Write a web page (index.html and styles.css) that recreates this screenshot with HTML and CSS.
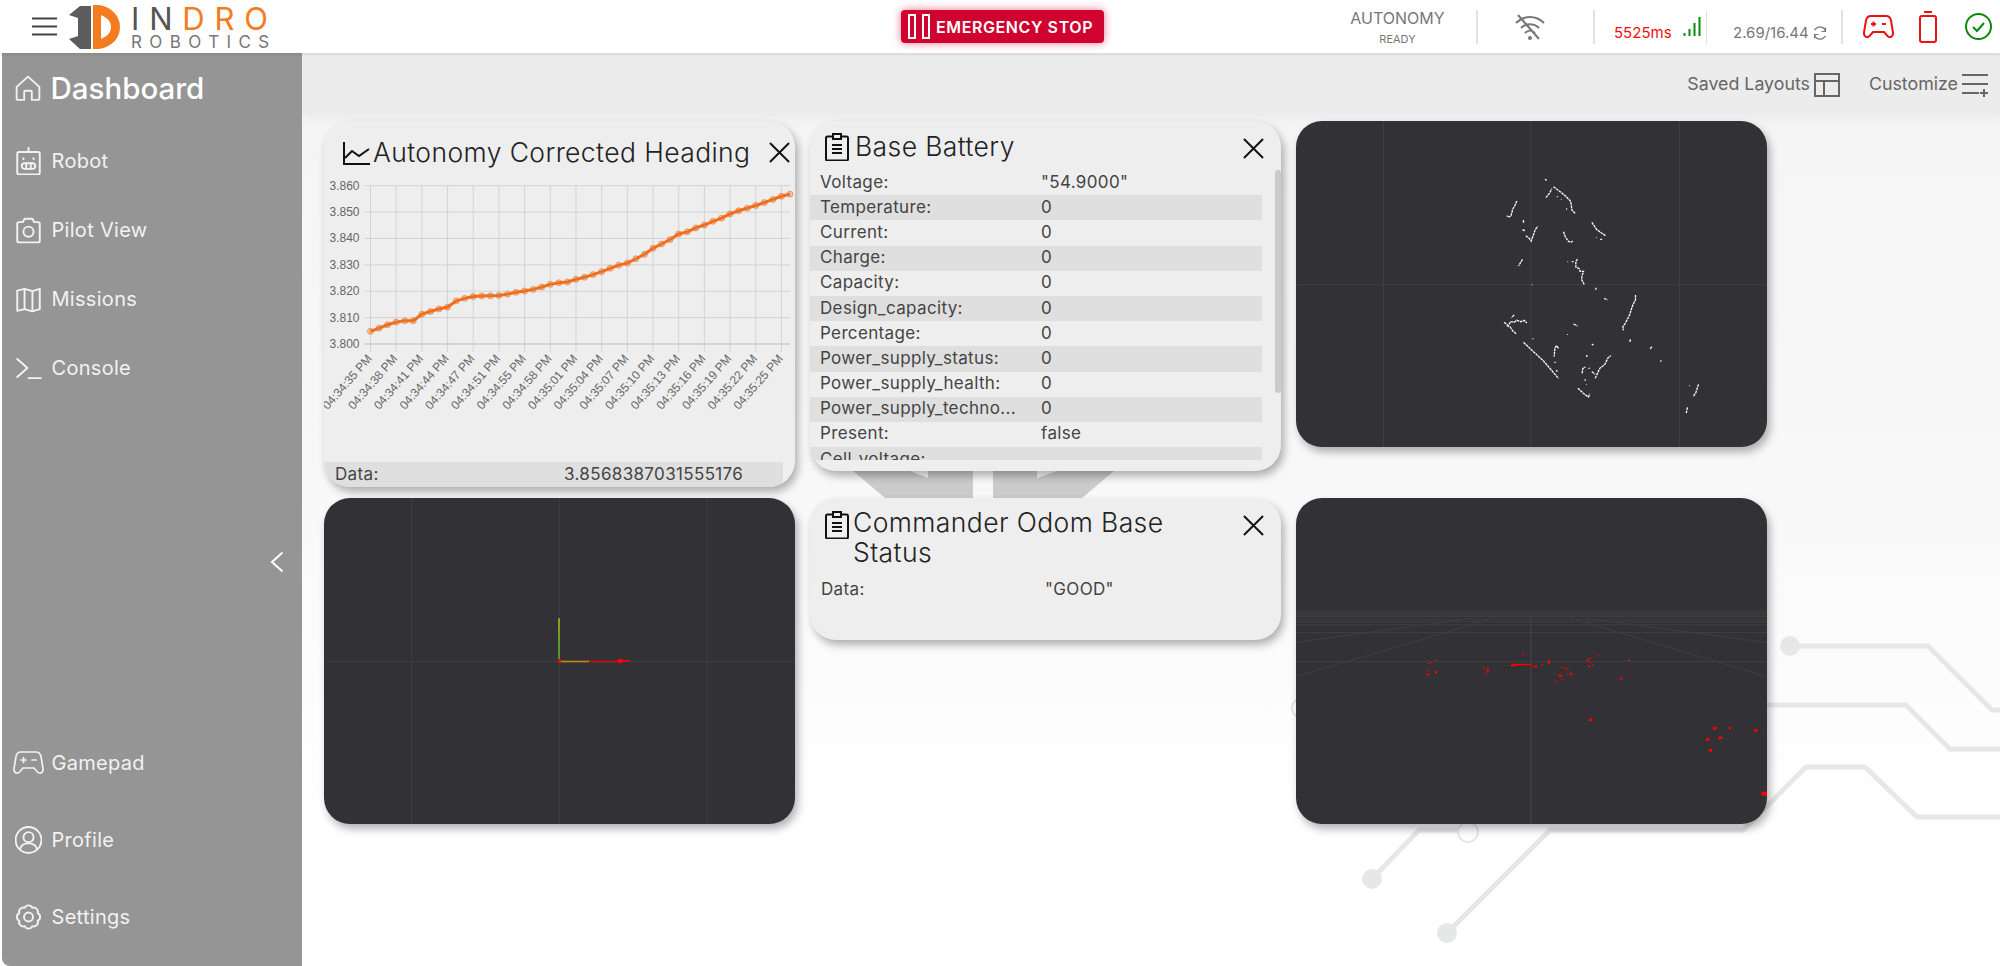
FILE: index.html
```html
<!DOCTYPE html>
<html lang="en">
<head>
    <meta charset="UTF-8">
    <meta name="viewport" content="width=device-width, initial-scale=1.0">
    <title>Indro Robotics Dashboard</title>
    <link rel="stylesheet" href="styles.css">
</head>
<body>
    <header class="topbar">
        <div class="brand">
            <svg class="hamburger" viewBox="0 0 25 19"><path d="M0 1.5h25M0 9.5h25M0 17.5h25"/></svg>
            <div class="logo">
                <svg class="logo-mark" viewBox="0 0 52 44">
                    <path fill="#5c5c5c" d="M0 10 11 1h11v43H11L0 34l9-3V13z"/>
                    <path fill="#f47b20" fill-rule="evenodd" d="M24 0h6c13 2 21 11 21 22s-8 20-21 22h-6zM32 10v24c7-3 10-7 10-12s-3-9-10-12z"/>
                </svg>
                <div class="logo-text">
                    <div class="logo-top">IN<span>DRO</span></div>
                    <div class="logo-bottom">ROBOTICS</div>
                </div>
            </div>
        </div>
        <button class="estop">
            <span class="estop-bars"><i></i><i></i></span>
            EMERGENCY STOP
        </button>
        <div class="status">
            <div class="seg-mode">
                <div class="mode-name">AUTONOMY</div>
                <div class="mode-state">READY</div>
            </div>
            <div class="seg seg-wifi">
                <svg class="wifi" viewBox="0 0 30 26">
                    <path d="M1 9c8-8 20-8 28 0M6 14c5-5 13-5 18 0M10 19c3-3 7-3 10 0M3 1l21 24"/>
                    <circle cx="15" cy="24" r="1"/>
                </svg>
            </div>
            <div class="seg seg-rate">
                <span class="latency">5525ms</span>
                <svg class="bars" viewBox="0 0 18 19"><path d="M1.5 19v-3M6.5 19v-7M11.5 19V6M16.500 19V0"/></svg>
            </div>
            <div class="seg seg-data">
                <span class="rate">2.69/16.44</span>
                <svg class="refresh" viewBox="0 0 14 14"><path d="M12.500 5.500A5.600 5.600 0 0 0 3 2.500L1.500 4M1.500 8.500A5.600 5.600 0 0 0 11 11.500L12.500 10M12.500 1.500v4h-4M1.500 12.500v-4h4"/></svg>
            </div>
            <div class="seg seg-icons">
                <svg class="pad-alert" viewBox="0 0 31 24"><path d="M8 1h15c3 0 4.500 2 5 4.500l2 12c.5 4-3 6-5.500 3.500L21 17H10l-3.500 4C4 23.500.5 21.500 1 17.500l2-12C3.500 3 5 1 8 1zM8 9h5M10.500 6.500v5M19 9h4"/></svg>
                <svg class="batt" viewBox="0 0 18 32"><path d="M5 1h8"/><rect x="1" y="5" width="16" height="26" rx="2"/></svg>
                <svg class="ok" viewBox="0 0 27 27"><circle cx="13.500" cy="13.500" r="12.500"/><path d="M8 14l4 4 7-8"/></svg>
            </div>
        </div>
    </header>

    <div class="layout">
        <nav class="sidebar">
            <a class="nav-item nav-main">
                <svg viewBox="0 0 24 24"><path d="M1.500 11 12 1.500 22.500 11v10.500a1.500 1.500 0 0 1-1.500 1.500h-5.500v-7.500a1 1 0 0 0-1-1h-5a1 1 0 0 0-1 1V23H3a1.500 1.500 0 0 1-1.500-1.500z"/></svg>
                Dashboard
            </a>
            <a class="nav-item">
                <svg viewBox="0 0 24 24"><path d="M12 0v4M3.500 4h17A1.500 1.500 0 0 1 22 5.500v17a1.500 1.500 0 0 1-1.500 1.500h-17A1.500 1.500 0 0 1 2 22.500v-17A1.500 1.500 0 0 1 3.500 4zM7.500 9.500v1M16.500 9.500v1"/><rect x="6" y="14" width="12" height="5" rx="2.500"/><path d="M10 14v5M14 14v5"/></svg>
                Robot
            </a>
            <a class="nav-item">
                <svg viewBox="0 0 24 24"><path d="M3.500 5H7l1.500-3h7L17 5h3.500A1.500 1.500 0 0 1 22 6.500v15a1.500 1.500 0 0 1-1.500 1.500h-17A1.500 1.500 0 0 1 2 21.500v-15A1.500 1.500 0 0 1 3.500 5z"/><circle cx="12" cy="13.500" r="4.500"/></svg>
                Pilot View
            </a>
            <a class="nav-item">
                <svg viewBox="0 0 24 24"><path d="M2 4.500 8.500 3l7 2 6.500-2v18l-6.500 2-7-2L2 22.500zM8.500 3v18M15.500 5v18"/></svg>
                Missions
            </a>
            <a class="nav-item">
                <svg viewBox="0 0 24 24"><path d="M2 4l9 8-9 8M12 21h11"/></svg>
                Console
            </a>
            <div class="collapse">
                <svg viewBox="0 0 14 22"><path d="M12.500 1.500 2 11l10.500 9.500"/></svg>
            </div>
            <a class="nav-item">
                <svg class="wide" viewBox="0 0 31 24"><path d="M8 1h15c3 0 4.500 2 5 4.500l2 12c.5 4-3 6-5.500 3.500L21 17H10l-3.500 4C4 23.500.5 21.500 1 17.500l2-12C3.500 3 5 1 8 1zM8 9h5M10.500 6.500v5M19 9h4"/></svg>
                Gamepad
            </a>
            <a class="nav-item nav-spaced">
                <svg viewBox="0 0 24 24"><circle cx="12" cy="12" r="11.500"/><circle cx="12" cy="9.500" r="4.500"/><path d="M4.500 20c1-3.500 4-5 7.500-5s6.500 1.500 7.500 5"/></svg>
                Profile
            </a>
            <a class="nav-item nav-spaced">
                <svg viewBox="0 0 24 24"><path d="M8.630 3.870A3.700 3.700 0 0 1 15.370 3.870 3.700 3.700 0 0 1 20.130 8.630 3.700 3.700 0 0 1 20.130 15.370 3.700 3.700 0 0 1 15.370 20.130 3.700 3.700 0 0 1 8.630 20.130 3.700 3.700 0 0 1 3.870 15.370 3.700 3.700 0 0 1 3.870 8.630 3.700 3.700 0 0 1 8.630 3.870z"/><circle cx="12" cy="12" r="4"/></svg>
                Settings
            </a>
        </nav>

        <main class="main">
            <svg class="circuit" viewBox="302 53 1698 913">
                <path class="watermark" d="M840 460 885 498H1082L1127 460z"/>
                <path class="watermark-cut" d="M973 460h20v38h-20zM910 471h18v7zM1057 471h-20v7z"/>
                <path class="trace" d="M1790 646H1928L1992 710H2000M1767 705H1906L1950 749H2000M1447 933 1550 830H1743L1806 767H1865L1917 817H2000M1372 879 1419 830H1458"/>
                <circle class="pad" cx="1790" cy="646" r="10"/>
                <circle class="pad" cx="1447" cy="933" r="10"/>
                <circle class="pad" cx="1372" cy="879" r="10"/>
                <circle class="pad-open" cx="1468" cy="832" r="10"/>
                <circle class="pad-open" cx="1302" cy="708" r="10"/>
            </svg>

            <div class="toolbar">
                <div class="tool">
                    Saved Layouts
                    <svg viewBox="0 0 26 24"><path d="M1 1h24v22H1zM1 8h24M10 8v15"/></svg>
                </div>
                <div class="tool">
                    Customize
                    <svg viewBox="0 0 26 24"><path d="M0 2h26M0 11h26M0 20h17M22 16v8M18 20h8"/></svg>
                </div>
            </div>

            <div class="grid">
                <section class="card card-chart">
                    <div class="card-head head-chart">
                        <svg class="card-icon" viewBox="0 0 27 23"><path d="M1 0v22h26M2 16l7-7 7 5 10-7"/></svg>
                        <h3>Autonomy Corrected Heading</h3>
                        <svg class="close" viewBox="0 0 22 22"><path d="M1 1l20 20M21 1 1 21"/></svg>
                    </div>
                    <svg id="chart" class="chart" viewBox="324 170 471 292"></svg>
                    <div class="row row-chart"><span class="row-key">Data:</span><span>3.8568387031555176</span></div>
                    <div class="resize"></div>
                </section>

                <section class="card card-battery">
                    <div class="card-head head-battery">
                        <svg class="card-icon" viewBox="0 0 24 28"><path d="M7 3.500H2.500A1.500 1.500 0 0 0 1 5v21a1.500 1.500 0 0 0 1.500 1.500h19A1.500 1.500 0 0 0 23 26V5a1.500 1.500 0 0 0-1.500-1.500H17M8 1h8v5H8zM7 12h10M7 16h10M7 20h10"/></svg>
                        <h3>Base Battery</h3>
                        <svg class="close" viewBox="0 0 22 22"><path d="M1 1l20 20M21 1 1 21"/></svg>
                    </div>
                    <div class="rows">
                        <div class="row"><span class="row-key">Voltage:</span><span>"54.9000"</span></div>
                        <div class="row"><span class="row-key">Temperature:</span><span>0</span></div>
                        <div class="row"><span class="row-key">Current:</span><span>0</span></div>
                        <div class="row"><span class="row-key">Charge:</span><span>0</span></div>
                        <div class="row"><span class="row-key">Capacity:</span><span>0</span></div>
                        <div class="row"><span class="row-key">Design_capacity:</span><span>0</span></div>
                        <div class="row"><span class="row-key">Percentage:</span><span>0</span></div>
                        <div class="row"><span class="row-key">Power_supply_status:</span><span>0</span></div>
                        <div class="row"><span class="row-key">Power_supply_health:</span><span>0</span></div>
                        <div class="row"><span class="row-key">Power_supply_techno...</span><span>0</span></div>
                        <div class="row"><span class="row-key">Present:</span><span>false</span></div>
                        <div class="row"><span class="row-key">Cell_voltage:</span><span></span></div>
                    </div>
                    <div class="scrollbar"></div>
                    <div class="resize"></div>
                </section>

                <section class="card card-dark">
                    <svg class="scene" viewBox="18 18 1412 978">
                        <path class="grid-line" d="M280 18V996M722 18V996M1168 18V996M18 509H1430"/>
                        <path class="scan" d="M765 192l4 5M790 215l20 15 15 12 15 15 3 10 2 18 10 10M767 248l10-12 8-15M800 245h3M812 253h2M828 282h3M680 258l-6 14-6 10-4 14-2 8-9 2-3-4M700 315v10M697 345h4l3 4M707 362l10 8 6 8 8-22 4-12 8-10M820 350l5 15 10 14 8 2 5-3M905 322l15 22 14 10 12 8M918 368h2M930 373h6M697 433l-12 20M832 440h2M845 440h5M862 432l-5 8v16l10 5 3 8h10l-4 12-2 12 8 15M725 509h2M917 518v6M942 550l10 5M1036 540v14l-8 16-10 30-12 24-8 12 2 10M1020 673v8M1085 695l-6 8M1112 736v4M672 600l-8 8M642 622l12 10 8-12 10 2 8-6 12 4 10-4 8 8M650 632l10 4 8 12 10 8M700 682l30 28 30 28 45 52M727 671h3M805 700l-6-8-5 8-2 25M795 740v4M800 765v5M850 627l12 6M832 657v2M905 687l5 4M890 720v6M876 775l2-15 8-4M895 760h4M905 770l10 8M915 790l14-30 15-12 10-20 8-6M885 793v4M888 808h2M863 820l20 18 12 8 4-10M1197 812h2M1225 808l-8 25-8 12M1192 877l-4 18"/>
                    </svg>
                    <div class="resize resize-dark"></div>
                </section>

                <section class="card card-dark">
                    <svg class="scene" viewBox="12 24 1413 979">
                        <defs>
                            <linearGradient id="axisY" gradientUnits="userSpaceOnUse" x1="717" y1="508" x2="717" y2="385"><stop offset="0" stop-color="#3fae2a"/><stop offset="1" stop-color="#b0b020"/></linearGradient>
                        </defs>
                        <path class="grid-line" d="M274 24V1003M718 24V1003M1162 24V1003M12 515H1425"/>
                        <path class="axis" stroke="url(#axisY)" d="M717 385v123"/>
                        <path class="axis" stroke="#cc1111" d="M807 515H900"/>
                        <path class="axis" stroke="#c4851c" d="M722 515H807"/>
                        <path class="axis-tip" d="M900 513h30M718 514h3"/>
                        <rect class="axis-dot" x="894" y="507" width="13" height="13"/>
                        <rect class="axis-dot" x="715" y="508" width="8" height="12"/>
                    </svg>
                    <div class="resize resize-dark"></div>
                </section>

                <section class="card card-status">
                    <div class="card-head head-status">
                        <svg class="card-icon" viewBox="0 0 24 28"><path d="M7 3.500H2.500A1.500 1.500 0 0 0 1 5v21a1.500 1.500 0 0 0 1.500 1.500h19A1.500 1.500 0 0 0 23 26V5a1.500 1.500 0 0 0-1.500-1.500H17M8 1h8v5H8zM7 12h10M7 16h10M7 20h10"/></svg>
                        <h3>Commander Odom Base Status</h3>
                        <svg class="close" viewBox="0 0 22 22"><path d="M1 1l20 20M21 1 1 21"/></svg>
                    </div>
                    <div class="row row-status"><span class="row-key">Data:</span><span>"GOOD"</span></div>
                    <div class="resize"></div>
                </section>

                <section class="card card-dark">
                    <svg class="scene" viewBox="13 24 1039 979" preserveAspectRatio="none">
                        <path class="horizon" d="M13 360H1052V382H13z"/>
                        <path class="grid-line" d="M531 380V1003M13 380H1052M13 388H1052M13 395H1052M13 405H1052M13 428H1052M13 515H1052M13 560 450 385M13 458 400 385M1052 560 620 385M1052 458 650 385"/>
                        <path class="laser" d="M490 524h43M487 527h12M535 530h10M571 511v11"/>
                        <g id="laser-dots"></g>
                    </svg>
                    <div class="resize resize-dark"></div>
                </section>
            </div>
        </main>
    </div>

    <script src="app.js"></script>
</body>
</html>
```

FILE: styles.css
```css
* {
    box-sizing: border-box;
}

body {
    font-family: Inter, "Open Sans", sans-serif;
    margin: 0;
    height: 100vh;
    overflow: hidden;
    background: #fff;
    color: #333;
    display: flex;
    flex-direction: column;
}

svg {
    display: block;
    flex: none;
}

/* Top bar */
.topbar {
    height: 53px;
    flex: none;
    display: flex;
    align-items: center;
    background: #fff;
    box-shadow: 0 1px 4px rgba(0, 0, 0, 0.12);
    position: relative;
    z-index: 2;
}

.brand {
    width: 901px;
    display: flex;
    align-items: center;
    padding-left: 32px;
}

.hamburger {
    width: 25px;
    height: 19px;
    fill: none;
    stroke: #444;
    stroke-width: 2;
}

.logo {
    display: flex;
    align-items: center;
    margin-left: 12px;
}

.logo-mark {
    width: 52px;
    height: 44px;
}

.logo-text {
    margin-left: 10px;
    line-height: 1;
}

.logo-top {
    font-size: 31px;
    font-weight: 400;
    letter-spacing: 9.800px;
    color: #555;
    height: 28px;
}

.logo-top span {
    color: #f47b20;
}

.logo-bottom {
    font-size: 17px;
    letter-spacing: 7.400px;
    color: #777;
    margin-top: 3px;
}

.estop {
    width: 203px;
    height: 33px;
    display: flex;
    align-items: center;
    gap: 6px;
    padding: 0 0 0 7px;
    border: none;
    border-radius: 4px;
    background: #d0022f;
    color: #fff;
    font-family: inherit;
    font-size: 16px;
    font-weight: 600;
    letter-spacing: 0.6px;
    white-space: nowrap;
    box-shadow: 0 0 8px rgba(208, 2, 47, 0.55);
}

.estop-bars {
    display: flex;
    gap: 6px;
}

.estop-bars i {
    width: 8px;
    height: 25px;
    border: 2px solid #fff;
}

.status {
    margin-left: auto;
    padding-right: 8px;
    display: flex;
    align-items: center;
    color: #777;
}

.seg-mode {
    width: 127px;
    padding-right: 30px;
    text-align: center;
}

.mode-name {
    font-size: 16px;
    line-height: 18px;
}

.mode-state {
    font-size: 11px;
    line-height: 12px;
    margin-top: 6px;
}

.seg {
    height: 34px;
    display: flex;
    align-items: center;
    border-left: 2px solid #e2e2e2;
}

.seg-wifi {
    width: 117px;
    padding-left: 37px;
}

.wifi {
    width: 30px;
    height: 26px;
    fill: none;
    stroke: #777;
    stroke-width: 2;
}

.seg-rate {
    width: 113px;
    padding-left: 19px;
    gap: 11px;
}

.latency {
    font-size: 15px;
    color: #f01010;
    margin-top: 12px;
}

.bars {
    width: 18px;
    height: 19px;
    fill: none;
    stroke: #0a8a0a;
    stroke-width: 2;
}

.seg-data {
    width: 135px;
    padding-left: 26px;
    gap: 4px;
    border-left-width: 1px;
}

.rate {
    font-size: 15px;
    margin-top: 12px;
}

.refresh {
    width: 14px;
    height: 14px;
    margin-top: 12px;
    fill: none;
    stroke: #777;
    stroke-width: 1.200;
}

.seg-icons {
    padding-left: 20px;
    overflow: visible;
}

.pad-alert {
    width: 31px;
    height: 24px;
    fill: none;
    stroke: #ee1111;
    stroke-width: 2;
}

.batt {
    width: 18px;
    height: 32px;
    margin-left: 25px;
    fill: none;
    stroke: #ee1111;
    stroke-width: 2;
}

.ok {
    width: 27px;
    height: 27px;
    margin-left: 28px;
    fill: none;
    stroke: #0a8a0a;
    stroke-width: 2;
}

/* Page body */
.layout {
    flex: 1;
    display: flex;
    min-height: 0;
}

.sidebar {
    width: 300px;
    margin-left: 2px;
    flex: none;
    display: flex;
    flex-direction: column;
    background: #959595;
    border-radius: 0 0 0 8px;
    color: #f2f2f2;
    padding: 11px 0 15px 13px;
    position: relative;
    z-index: 1;
}

.nav-item {
    height: 69px;
    display: flex;
    align-items: center;
    gap: 9.500px;
    font-size: 20px;
    letter-spacing: 0.3px;
}

.nav-item svg {
    width: 27px;
    height: 28px;
    fill: none;
    stroke: #f2f2f2;
    stroke-width: 1.700;
    stroke-linejoin: round;
    stroke-linecap: round;
}

.nav-item svg.wide {
    width: 31px;
    height: 24px;
    margin-left: -2px;
    margin-right: -2px;
}

.nav-main {
    height: 48px;
    margin-bottom: 14px;
    font-size: 29.500px;
    letter-spacing: 0;
    font-weight: 500;
    color: #fff;
}

.nav-main svg {
    width: 26px;
    height: 26px;
}

.nav-spaced {
    margin-top: 8px;
}

.collapse {
    flex: 1;
    display: flex;
    align-items: center;
    justify-content: flex-end;
    padding: 0 18px 6px 0;
}

.collapse svg {
    width: 14px;
    height: 22px;
    fill: none;
    stroke: #fff;
    stroke-width: 2;
}

/* Main area */
.main {
    flex: 1;
    position: relative;
    background: linear-gradient(#f4f4f4 0, #f8f8f8 45%, #fff 85%);
}

.circuit {
    position: absolute;
    left: 0;
    top: 0;
    width: 1698px;
    height: 913px;
}

.watermark {
    fill: #cbcbcb;
}

.watermark-cut {
    fill: #f8f8f8;
}

.trace {
    fill: none;
    stroke: #e6e8e8;
    stroke-width: 5;
}

.pad {
    fill: #e6e8e8;
}

.pad-open {
    fill: #fff;
    stroke: #e6e8e8;
    stroke-width: 2;
}

.toolbar {
    height: 62px;
    position: relative;
    display: flex;
    justify-content: flex-end;
    gap: 29px;
    padding: 20px 12px 0 0;
    background: #ececec;
    box-shadow: 0 4px 10px #ececec;
    font-size: 17.800px;
    color: #666;
}

.tool {
    display: flex;
    align-items: flex-start;
    gap: 4px;
    line-height: 21px;
}

.tool svg {
    width: 26px;
    height: 24px;
    fill: none;
    stroke: #666;
    stroke-width: 2;
}

.grid {
    position: relative;
    margin-top: 6px;
    padding-left: 22px;
    display: grid;
    grid-template-columns: repeat(3, 471px);
    grid-template-rows: 377px 326px;
    column-gap: 15px;
    align-items: start;
}

.card {
    position: relative;
    background: #eeeeee;
    border-radius: 26px;
    box-shadow: 3px 5px 9px rgba(0, 0, 0, 0.3);
    overflow: hidden;
}

.card h3 {
    flex: 1;
    margin: 0;
    font-size: 26.500px;
    font-weight: 300;
    letter-spacing: 0.4px;
    line-height: 30px;
    color: #222;
}

.card-head {
    display: flex;
    align-items: flex-start;
}

.close {
    width: 21px;
    height: 21px;
    fill: none;
    stroke: #111;
    stroke-width: 2;
}

.card-icon {
    fill: none;
    stroke: #111;
    stroke-width: 2;
}

.card-chart {
    height: 366px;
}

.head-chart {
    height: 49px;
    padding: 21px 5px 0 19px;
}

.head-chart h3 {
    margin-top: -5px;
}

.head-chart .card-icon {
    width: 27px;
    height: 23px;
    margin-right: 3px;
}

.chart {
    width: 471px;
    height: 292px;
}

.chart-grid {
    stroke: #d3d3d3;
    stroke-width: 1;
}

.chart-base {
    stroke: #bbb;
    stroke-width: 1;
}

.chart-line {
    fill: none;
    stroke: #ee6f1f;
    stroke-width: 3;
}

.chart-dot {
    fill: rgba(238, 111, 31, 0.35);
    stroke: rgba(238, 111, 31, 0.6);
    stroke-width: 1;
}

.chart-text {
    font-family: "Liberation Sans", Arial, sans-serif;
    font-size: 12px;
    fill: #666;
}

.row {
    height: 25.200px;
    display: flex;
    align-items: center;
    padding: 0 0 2px 10px;
    font-size: 17px;
    letter-spacing: 0.35px;
    color: #444;
}

.row-key {
    width: 221px;
    flex: none;
}

.rows {
    height: 290px;
    width: 452px;
    overflow: hidden;
}

.rows .row:nth-child(even) {
    background: #dfdfdf;
}

.row-chart {
    width: 459px;
    background: #dfdfdf;
    padding-left: 11px;
}

.row-chart .row-key {
    width: 229px;
}

.card-battery {
    height: 350px;
}

.head-battery {
    height: 49px;
    padding: 12px 17px 0 15px;
}

.head-battery h3 {
    margin-top: -2px;
}

.head-battery .card-icon,
.head-status .card-icon {
    width: 24px;
    height: 28px;
    margin-right: 6px;
}

.head-battery .close {
    margin-top: 5px;
}

.scrollbar {
    position: absolute;
    right: 0;
    top: 49px;
    width: 6px;
    height: 223px;
    background: #cbcbcb;
    border-radius: 3px;
}

.card-status {
    height: 142px;
}

.head-status {
    height: 77px;
    padding: 11px 17px 0 15px;
}

.head-status h3 {
    margin-top: -2px;
}

.head-status .card-icon {
    margin-top: 2px;
    margin-right: 4px;
}

.head-status .close {
    margin-top: 6px;
}

.row-status {
    padding-left: 11px;
    margin-top: 2px;
}

.row-status .row-key {
    width: 224px;
}

.card-dark {
    height: 326px;
    background: #323135;
}

.scene {
    width: 471px;
    height: 326px;
}

.grid-line {
    fill: none;
    stroke: #3f3f42;
    stroke-width: 3;
}

.scan {
    fill: none;
    stroke: #f8f8f8;
    stroke-width: 4;
    stroke-dasharray: 8 2;
}

.axis {
    fill: none;
    stroke-width: 5;
}

.axis-tip {
    fill: none;
    stroke: #f00;
    stroke-width: 5;
}

.axis-dot {
    fill: #f00;
}

.horizon {
    fill: #38383a;
}

.laser {
    fill: none;
    stroke: #f00;
    stroke-width: 5;
}

.laser-dot {
    fill: #f00;
}

.resize {
    position: absolute;
    right: 1px;
    bottom: 1px;
    width: 9px;
    height: 9px;
    background: linear-gradient(135deg, transparent 48%, #666 48%, #666 58%, transparent 58%, transparent 72%, #666 72%, #666 82%, transparent 82%);
}

.resize-dark {
    background: linear-gradient(135deg, transparent 48%, #aaa 48%, #aaa 58%, transparent 58%, transparent 72%, #aaa 72%, #aaa 82%, transparent 82%);
}
```

FILE: app.js
```js
// heading samples, chart drawn oldest to newest
const heading = [3.8048, 3.806, 3.8073, 3.8083, 3.8088, 3.8088, 3.8113, 3.8123, 3.8133, 3.814, 3.8163, 3.8173, 3.818, 3.8182, 3.8183, 3.8184, 3.8189, 3.8196, 3.8201, 3.8207, 3.8216, 3.8226, 3.8232, 3.8235, 3.8245, 3.8253, 3.8263, 3.8274, 3.8287, 3.8299, 3.8307, 3.8323, 3.834, 3.8363, 3.8379, 3.8396, 3.8417, 3.8425, 3.844, 3.8451, 3.8465, 3.8477, 3.8493, 3.8505, 3.8515, 3.8525, 3.8536, 3.8548, 3.856, 3.8568];
const times = ["04:34:35 PM", "04:34:38 PM", "04:34:41 PM", "04:34:44 PM", "04:34:47 PM", "04:34:51 PM", "04:34:55 PM", "04:34:58 PM", "04:35:01 PM", "04:35:04 PM", "04:35:07 PM", "04:35:10 PM", "04:35:13 PM", "04:35:16 PM", "04:35:19 PM", "04:35:22 PM", "04:35:25 PM"];

const plotLeft = 370.5, plotRight = 790, plotTop = 185.7, plotBottom = 344;
const xStep = (plotRight - plotLeft) / (heading.length - 1);

function yFor(value) {
    return plotBottom - (value - 3.8) / 0.06 * (plotBottom - plotTop);
}

function drawChart() {
    let html = "";

    for (let i = 0; i <= 6; i++) {
        const y = plotTop + i * (plotBottom - plotTop) / 6;
        const cls = i === 6 ? "chart-base" : "chart-grid";
        html += `<line class="${cls}" x1="${plotLeft - 6}" x2="${plotRight}" y1="${y}" y2="${y}"/>`;
        html += `<text class="chart-text" x="359.500" y="${y + 4}" text-anchor="end">${(3.86 - i * 0.01).toFixed(3)}</text>`;
    }

    times.forEach((time, i) => {
        const x = plotLeft + i * xStep * 3;
        html += `<line class="chart-grid" x1="${x}" x2="${x}" y1="${plotTop}" y2="${plotBottom + 8}"/>`;
        html += `<text class="chart-text" text-anchor="end" transform="translate(${x + 2} 359) rotate(-49)">${time}</text>`;
    });

    const points = heading.map((value, i) => `${plotLeft + i * xStep},${yFor(value)}`);
    html += `<polyline class="chart-line" points="${points.join(" ")}"/>`;
    heading.forEach((value, i) => {
        html += `<circle class="chart-dot" cx="${plotLeft + i * xStep}" cy="${yFor(value)}" r="3"/>`;
    });

    document.getElementById("chart").innerHTML = html;
}

// laser returns in the front camera view, in view coordinates
const laser = [[513, 493, 2], [323, 511, 2], [312, 517, 2], [306, 521, 2], [294, 527, 1], [314, 530, 1], [303, 541, 2], [322, 547, 3], [304, 554, 3], [270, 550, 1], [410, 534, 1], [428, 534, 2], [436, 535, 2], [436, 542, 3], [428, 550, 1], [436, 552, 2], [555, 525, 2], [600, 534, 2], [608, 535, 2], [612, 540, 2], [595, 557, 3], [600, 560, 2], [620, 552, 3], [612, 555, 1], [600, 570, 2], [587, 577, 2], [658, 510, 2], [662, 505, 2], [655, 513, 2], [662, 518, 2], [668, 525, 2], [660, 530, 2], [666, 537, 1], [679, 498, 2], [717, 496, 1], [747, 512, 2], [719, 568, 1], [730, 566, 3], [663, 690, 4], [937, 716, 4], [970, 715, 3], [1027, 722, 4], [949, 744, 4], [921, 749, 4], [927, 782, 4], [1046, 912, 6]];

function drawLaser() {
    let html = "";
    laser.forEach(([x, y, size]) => {
        html += `<rect class="laser-dot" x="${x - size}" y="${y - size}" width="${size * 2}" height="${size * 2}"/>`;
    });
    document.getElementById("laser-dots").innerHTML = html;
}

drawChart();
drawLaser();
```
